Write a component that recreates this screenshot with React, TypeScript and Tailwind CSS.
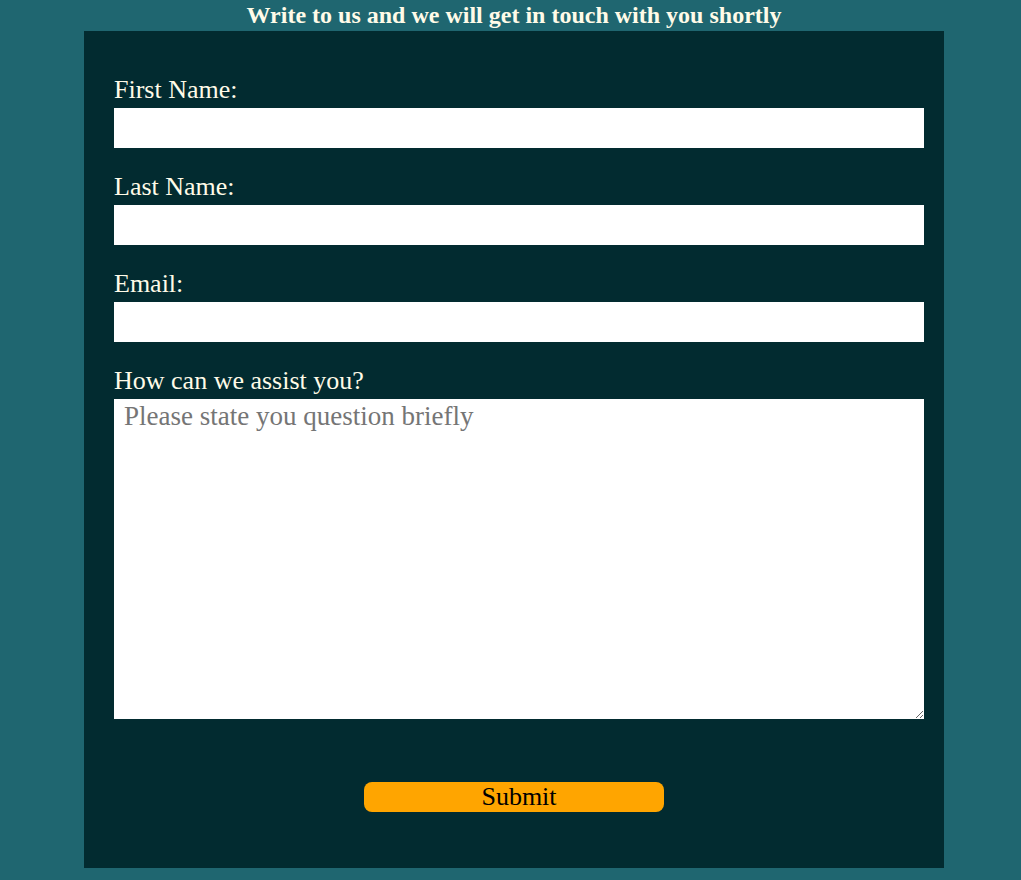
export default function App() {
  const fields = ["First Name:", "Last Name:", "Email:"];
  return (
    <div className="min-h-[880px] bg-[#1f6670] pb-3 pl-[7px]">
      <h2 className="h-[31px] text-center text-[24px] font-bold leading-[31px] text-[#fffbe8] [font-family:'Liberation_Serif',serif]">
        Write to us and we will get in touch with you shortly
      </h2>
      <form className="mx-auto flex w-[860px] flex-col bg-[#022b30] pl-[30px] pr-[20px] pt-[20px] pb-[56px] [font-family:'Liberation_Serif',serif]">
        {fields.map((f) => (
          <div key={f} className="mt-[25px] flex flex-col">
            <label className="h-8 text-[26px] leading-[27px] text-[#fffbe8]">{f}</label>
            <input type="text" className="h-10 w-full bg-white outline-none" />
          </div>
        ))}
        <div className="mt-[25px] flex flex-col">
          <label className="h-8 text-[26px] leading-[27px] text-[#fffbe8]">How can we assist you?</label>
          <textarea
            placeholder="Please state you question briefly"
            className="h-[320px] w-full bg-white px-[10px] py-0 text-[27px] leading-[34px] text-black outline-none placeholder:text-[#757575]"
          />
        </div>
        <button
          type="button"
          className="ml-[250px] mt-[63px] h-[30px] w-[300px] rounded-lg bg-[#ffa500] pl-[10px] text-[26px] leading-[30px] text-black"
        >
          Submit
        </button>
      </form>
    </div>
  );
}
